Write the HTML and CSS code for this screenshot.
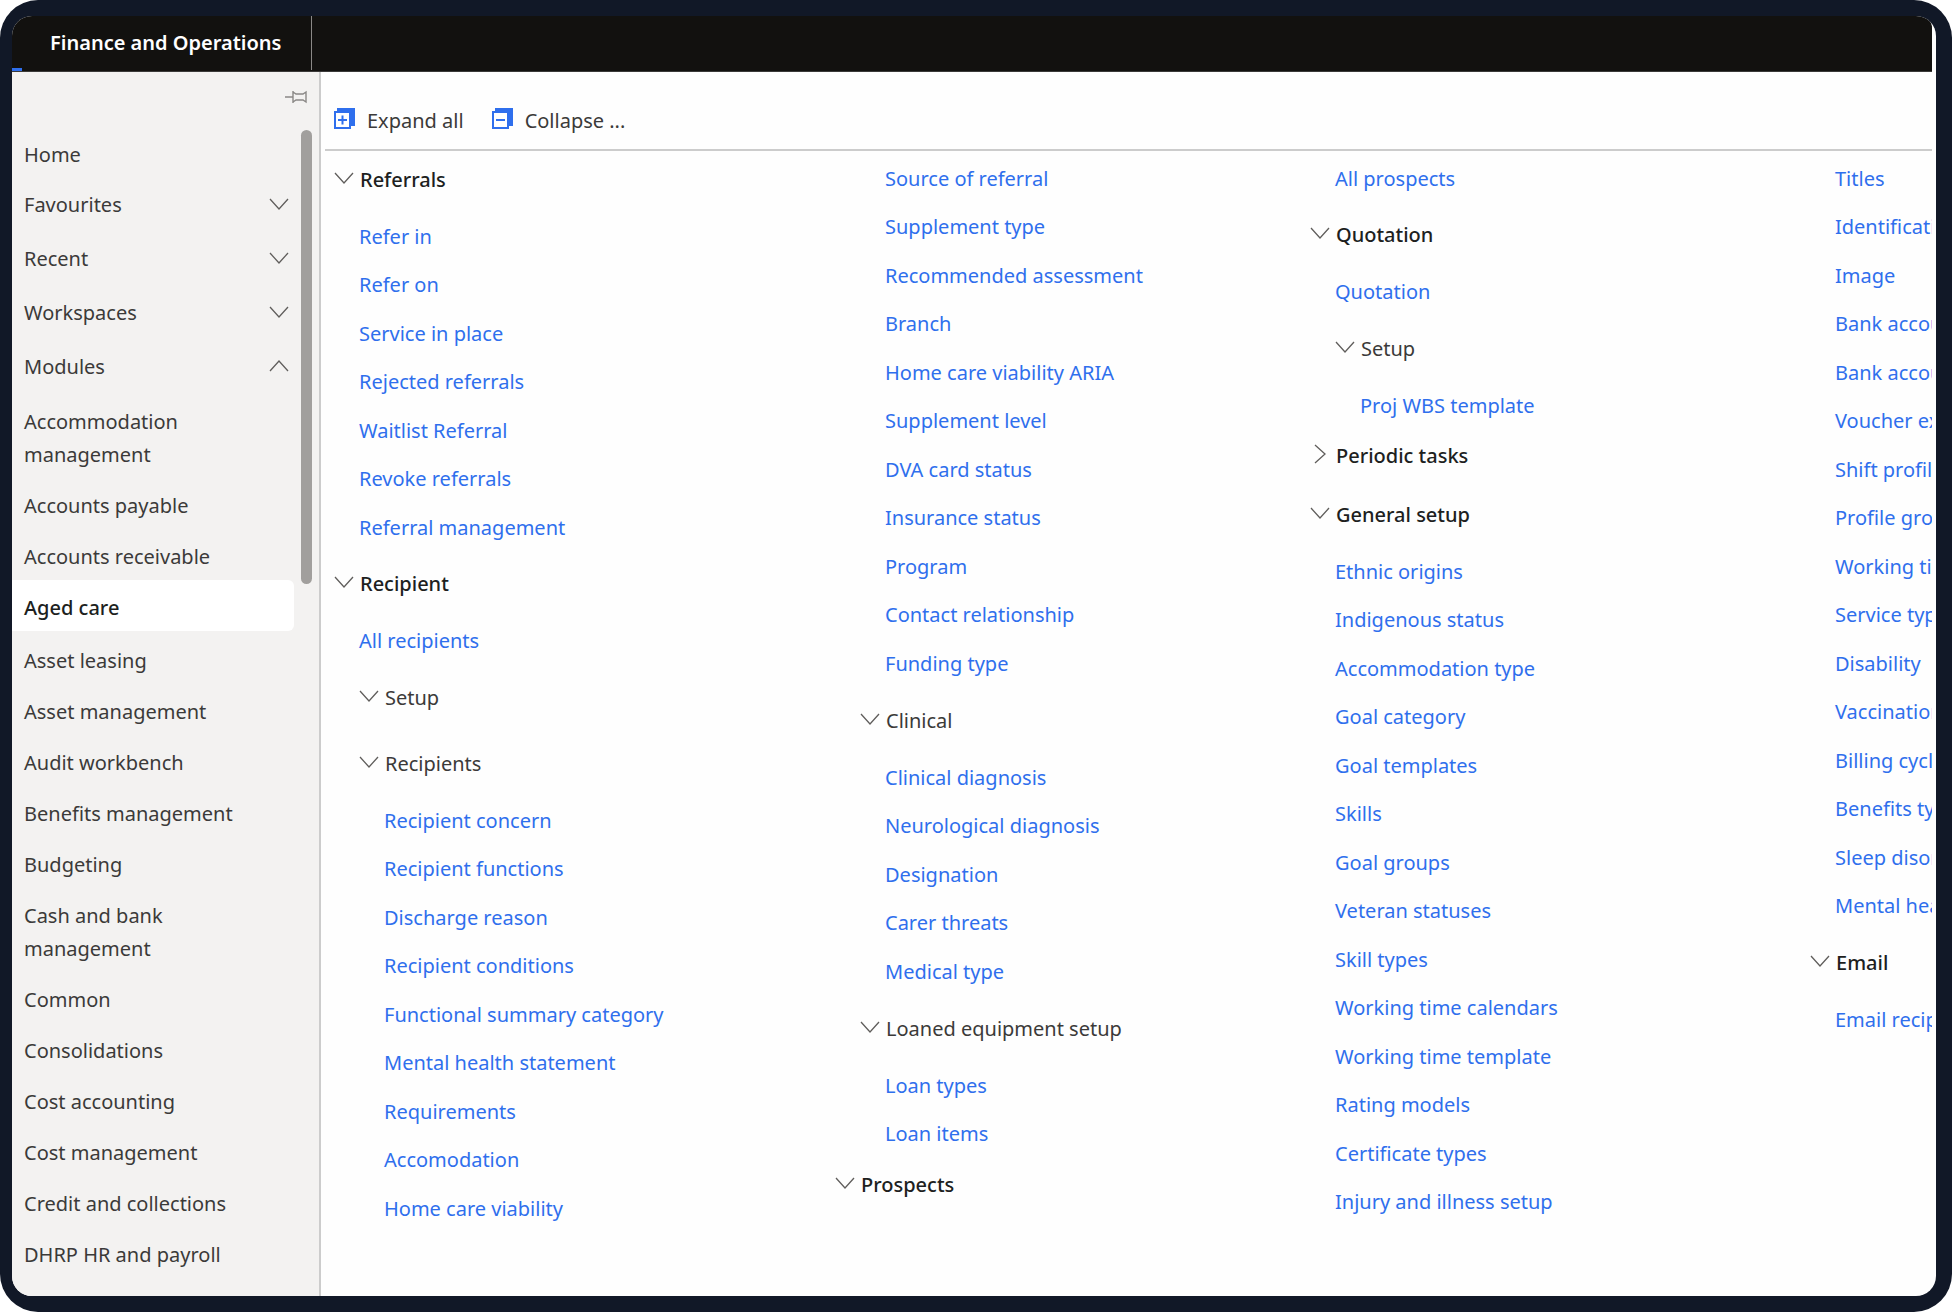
FILE: index.html
```
<!DOCTYPE html>
<html lang="en">
<head>
    <meta charset="UTF-8">
    <meta name="viewport" content="width=device-width, initial-scale=1.0">
    <title>Finance and Operations</title>
    <link rel="stylesheet" href="styles.css">
</head>
<body>

    <!-- Shared icons -->
    <svg class="icon-defs" aria-hidden="true">
        <symbol id="chevron-down" viewBox="0 0 20 12">
            <path d="M1 1 L10 11 L19 1" fill="none" stroke="currentColor" stroke-width="1.3"/>
        </symbol>
        <symbol id="chevron-up" viewBox="0 0 20 12">
            <path d="M1 11 L10 1 L19 11" fill="none" stroke="currentColor" stroke-width="1.3"/>
        </symbol>
        <symbol id="chevron-right" viewBox="0 0 20 20">
            <path d="M5 1 L15 10 L5 19" fill="none" stroke="currentColor" stroke-width="1.3"/>
        </symbol>
    </svg>

    <div class="frame">
        <div class="app">

            <!-- Top bar -->
            <header class="topbar">
                <h1 class="topbar-title">Finance and Operations</h1>
            </header>

            <div class="workspace">

                <!-- Sidebar -->
                <aside class="sidebar">
                    <div class="sidebar-top">
                        <button class="pin-btn" aria-label="Unpin navigation">
                            <svg width="22" height="14" viewBox="0 0 22 14" fill="none" stroke="currentColor" stroke-width="1.4">
                                <path d="M0 7 H8 M8 1 V13 M8 2 L11 4 H18 L21 2 V12 L18 10 H11 L8 12"/>
                            </svg>
                        </button>
                    </div>
                    <div class="sidebar-body">
                        <nav class="nav">
                            <a class="nav-item" href="#">Home</a>
                            <button class="nav-section">Favourites <svg class="chevron"><use href="#chevron-down"/></svg></button>
                            <button class="nav-section">Recent <svg class="chevron"><use href="#chevron-down"/></svg></button>
                            <button class="nav-section">Workspaces <svg class="chevron"><use href="#chevron-down"/></svg></button>
                            <button class="nav-section">Modules <svg class="chevron"><use href="#chevron-up"/></svg></button>
                            <a class="nav-item" href="#">Accommodation management</a>
                            <a class="nav-item" href="#">Accounts payable</a>
                            <a class="nav-item" href="#">Accounts receivable</a>
                            <a class="nav-item active" href="#">Aged care</a>
                            <a class="nav-item" href="#">Asset leasing</a>
                            <a class="nav-item" href="#">Asset management</a>
                            <a class="nav-item" href="#">Audit workbench</a>
                            <a class="nav-item" href="#">Benefits management</a>
                            <a class="nav-item" href="#">Budgeting</a>
                            <a class="nav-item" href="#">Cash and bank management</a>
                            <a class="nav-item" href="#">Common</a>
                            <a class="nav-item" href="#">Consolidations</a>
                            <a class="nav-item" href="#">Cost accounting</a>
                            <a class="nav-item" href="#">Cost management</a>
                            <a class="nav-item" href="#">Credit and collections</a>
                            <a class="nav-item" href="#">DHRP HR and payroll</a>
                        </nav>
                        <div class="scroll-track">
                            <div class="scroll-thumb"></div>
                        </div>
                    </div>
                </aside>

                <!-- Module menu -->
                <main class="content">
                    <div class="toolbar">
                        <button class="tool-btn">
                            <svg width="21" height="21" viewBox="0 0 21 21" fill="none" stroke="currentColor">
                                <path d="M3 2 H19 V18" stroke-width="4"/>
                                <rect x="1" y="4" width="15" height="16" fill="#fff" stroke-width="2"/>
                                <path d="M4 12 H13 M8.5 7.5 V16.5" stroke-width="2"/>
                            </svg>
                            Expand all
                        </button>
                        <button class="tool-btn">
                            <svg width="21" height="21" viewBox="0 0 21 21" fill="none" stroke="currentColor">
                                <path d="M3 2 H19 V18" stroke-width="4"/>
                                <rect x="1" y="4" width="15" height="16" fill="#fff" stroke-width="2"/>
                                <path d="M4 12 H13" stroke-width="2"/>
                            </svg>
                            Collapse ...
                        </button>
                    </div>

                    <div class="menu">
                        <div class="menu-column">
                            <button class="group-title first"><svg class="chevron"><use href="#chevron-down"/></svg>Referrals</button>
                            <ul class="links">
                                <li><a href="#">Refer in</a></li>
                                <li><a href="#">Refer on</a></li>
                                <li><a href="#">Service in place</a></li>
                                <li><a href="#">Rejected referrals</a></li>
                                <li><a href="#">Waitlist Referral</a></li>
                                <li><a href="#">Revoke referrals</a></li>
                                <li><a href="#">Referral management</a></li>
                            </ul>
                            <button class="group-title"><svg class="chevron"><use href="#chevron-down"/></svg>Recipient</button>
                            <ul class="links">
                                <li><a href="#">All recipients</a></li>
                            </ul>
                            <button class="group-title sub"><svg class="chevron"><use href="#chevron-down"/></svg>Setup</button>
                            <button class="group-title sub"><svg class="chevron"><use href="#chevron-down"/></svg>Recipients</button>
                            <ul class="links nested">
                                <li><a href="#">Recipient concern</a></li>
                                <li><a href="#">Recipient functions</a></li>
                                <li><a href="#">Discharge reason</a></li>
                                <li><a href="#">Recipient conditions</a></li>
                                <li><a href="#">Functional summary category</a></li>
                                <li><a href="#">Mental health statement</a></li>
                                <li><a href="#">Requirements</a></li>
                                <li><a href="#">Accomodation</a></li>
                                <li><a href="#">Home care viability</a></li>
                            </ul>
                        </div>

                        <div class="menu-column">
                            <ul class="links nested">
                                <li><a href="#">Source of referral</a></li>
                                <li><a href="#">Supplement type</a></li>
                                <li><a href="#">Recommended assessment</a></li>
                                <li><a href="#">Branch</a></li>
                                <li><a href="#">Home care viability ARIA</a></li>
                                <li><a href="#">Supplement level</a></li>
                                <li><a href="#">DVA card status</a></li>
                                <li><a href="#">Insurance status</a></li>
                                <li><a href="#">Program</a></li>
                                <li><a href="#">Contact relationship</a></li>
                                <li><a href="#">Funding type</a></li>
                            </ul>
                            <button class="group-title sub"><svg class="chevron"><use href="#chevron-down"/></svg>Clinical</button>
                            <ul class="links nested">
                                <li><a href="#">Clinical diagnosis</a></li>
                                <li><a href="#">Neurological diagnosis</a></li>
                                <li><a href="#">Designation</a></li>
                                <li><a href="#">Carer threats</a></li>
                                <li><a href="#">Medical type</a></li>
                            </ul>
                            <button class="group-title sub"><svg class="chevron"><use href="#chevron-down"/></svg>Loaned equipment setup</button>
                            <ul class="links nested">
                                <li><a href="#">Loan types</a></li>
                                <li><a href="#">Loan items</a></li>
                            </ul>
                            <button class="group-title tight"><svg class="chevron"><use href="#chevron-down"/></svg>Prospects</button>
                        </div>

                        <div class="menu-column">
                            <ul class="links">
                                <li><a href="#">All prospects</a></li>
                            </ul>
                            <button class="group-title"><svg class="chevron"><use href="#chevron-down"/></svg>Quotation</button>
                            <ul class="links">
                                <li><a href="#">Quotation</a></li>
                            </ul>
                            <button class="group-title sub"><svg class="chevron"><use href="#chevron-down"/></svg>Setup</button>
                            <ul class="links nested">
                                <li><a href="#">Proj WBS template</a></li>
                            </ul>
                            <button class="group-title tight"><svg class="chevron closed"><use href="#chevron-right"/></svg>Periodic tasks</button>
                            <button class="group-title tight"><svg class="chevron"><use href="#chevron-down"/></svg>General setup</button>
                            <ul class="links">
                                <li><a href="#">Ethnic origins</a></li>
                                <li><a href="#">Indigenous status</a></li>
                                <li><a href="#">Accommodation type</a></li>
                                <li><a href="#">Goal category</a></li>
                                <li><a href="#">Goal templates</a></li>
                                <li><a href="#">Skills</a></li>
                                <li><a href="#">Goal groups</a></li>
                                <li><a href="#">Veteran statuses</a></li>
                                <li><a href="#">Skill types</a></li>
                                <li><a href="#">Working time calendars</a></li>
                                <li><a href="#">Working time template</a></li>
                                <li><a href="#">Rating models</a></li>
                                <li><a href="#">Certificate types</a></li>
                                <li><a href="#">Injury and illness setup</a></li>
                            </ul>
                        </div>

                        <div class="menu-column">
                            <ul class="links">
                                <li><a href="#">Titles</a></li>
                                <li><a href="#">Identification</a></li>
                                <li><a href="#">Image</a></li>
                                <li><a href="#">Bank account</a></li>
                                <li><a href="#">Bank accounts</a></li>
                                <li><a href="#">Voucher expiry</a></li>
                                <li><a href="#">Shift profile</a></li>
                                <li><a href="#">Profile group</a></li>
                                <li><a href="#">Working time</a></li>
                                <li><a href="#">Service type</a></li>
                                <li><a href="#">Disability</a></li>
                                <li><a href="#">Vaccination</a></li>
                                <li><a href="#">Billing cycle</a></li>
                                <li><a href="#">Benefits type</a></li>
                                <li><a href="#">Sleep disorder</a></li>
                                <li><a href="#">Mental health</a></li>
                            </ul>
                            <button class="group-title"><svg class="chevron"><use href="#chevron-down"/></svg>Email</button>
                            <ul class="links">
                                <li><a href="#">Email recipient</a></li>
                            </ul>
                        </div>
                    </div>
                </main>
            </div>
        </div>
    </div>

</body>
</html>
```
FILE: styles.css
```
* {
    margin: 0;
    padding: 0;
    box-sizing: border-box;
}

body {
    font-family: 'Segoe UI', 'Noto Sans', 'Open Sans', sans-serif;
    font-size: 20px;
    line-height: 33px;
    color: #3b3a39;
    background-color: #fff;
}

button {
    font: inherit;
    color: inherit;
    background: none;
    border: none;
    cursor: pointer;
}

a {
    color: inherit;
    text-decoration: none;
}

svg {
    flex-shrink: 0;
}

.icon-defs {
    display: none;
}

.chevron {
    width: 20px;
    height: 12px;
    color: #605e5c;
}

.chevron.closed {
    height: 20px;
}

/* Dark rounded frame around the whole app */
.frame {
    display: flex;
    min-height: 100vh;
    padding: 16px 16px 16px 12px;
    background-color: #111827;
    border-radius: 38px;
}

.app {
    display: flex;
    flex-direction: column;
    flex: 1;
    min-width: 0;
    padding-right: 4px;
    background-color: #fefefe;
    border-radius: 20px;
    overflow: hidden;
}

/* Top bar */
.topbar {
    display: flex;
    height: 56px;
    background-color: #12110f;
    border-bottom: 1px solid #3b3a39;
    border-top-right-radius: 12px;
}

.topbar-title {
    display: flex;
    align-items: center;
    height: 54px;
    padding: 0 30px 2px 38px;
    font-size: 20px;
    font-weight: 600;
    color: #fff;
    border-right: 1px solid #8a8886;
}

/* Focus marker under the left end of the bar */
.topbar::before {
    content: "";
    align-self: flex-end;
    width: 10px;
    height: 3px;
    margin-right: -10px;
    background-color: #2f6fed;
}

.workspace {
    display: flex;
    flex: 1;
}

/* Sidebar */
.sidebar {
    flex: 0 0 309px;
    background-color: #f3f2f1;
    border-right: 2px solid #cccccc;
}

.sidebar-top {
    display: flex;
    justify-content: flex-end;
    height: 55px;
    padding: 18px 12px 0 0;
}

.pin-btn {
    display: flex;
    height: 14px;
    color: #8a8886;
}

.sidebar-body {
    display: flex;
    justify-content: space-between;
    padding-right: 7px;
}

.nav {
    display: flex;
    flex-direction: column;
    width: 282px;
}

.nav-item {
    padding: 11px 60px 7px 12px;
}

.nav-section {
    display: flex;
    align-items: center;
    justify-content: space-between;
    height: 54px;
    padding: 0 5px 2px 12px;
}

.nav-item.active {
    margin-bottom: 2px;
    color: #201f1e;
    font-weight: 500;
    background-color: #fff;
    border-radius: 0 6px 6px 0;
}

.scroll-track {
    width: 11px;
    padding-top: 3px;
}

.scroll-thumb {
    height: 454px;
    background-color: #a19f9d;
    border-radius: 6px;
}

/* Menu content */
.content {
    flex: 1;
    min-width: 0;
    padding-left: 4px;
}

.toolbar {
    display: flex;
    gap: 28px;
    height: 79px;
    padding: 30px 9px 0;
    border-bottom: 2px solid #cccccc;
}

.tool-btn {
    display: flex;
    align-items: center;
    gap: 12px;
    height: 36px;
}

.tool-btn svg {
    margin-bottom: 4px;
    color: #2f6fed;
}

.menu {
    display: grid;
    grid-template-columns: minmax(0, 501fr) minmax(0, 475fr) minmax(0, 500fr) minmax(0, 122fr);
    padding: 3px 0 0 9px;
    overflow: hidden;
}

.menu-column {
    white-space: nowrap;
}

.group-title {
    display: flex;
    align-items: center;
    gap: 6px;
    height: 65px;
    font-weight: 500;
    color: #201f1e;
}

.group-title .chevron {
    margin-bottom: 3px;
}

.group-title.first {
    height: 50px;
    margin-bottom: 8px;
}

.group-title.sub {
    height: 66px;
    margin-left: 25px;
    font-weight: 400;
    color: #3b3a39;
}

.group-title.tight {
    margin-top: -6px;
}

.links {
    padding-left: 25px;
    list-style: none;
}

.links.nested {
    padding-left: 50px;
}

.links li {
    display: flex;
    align-items: center;
    height: 48px;
}

.links li:nth-child(even) {
    height: 49px;
}

.links a {
    color: #2f6fed;
}
```
